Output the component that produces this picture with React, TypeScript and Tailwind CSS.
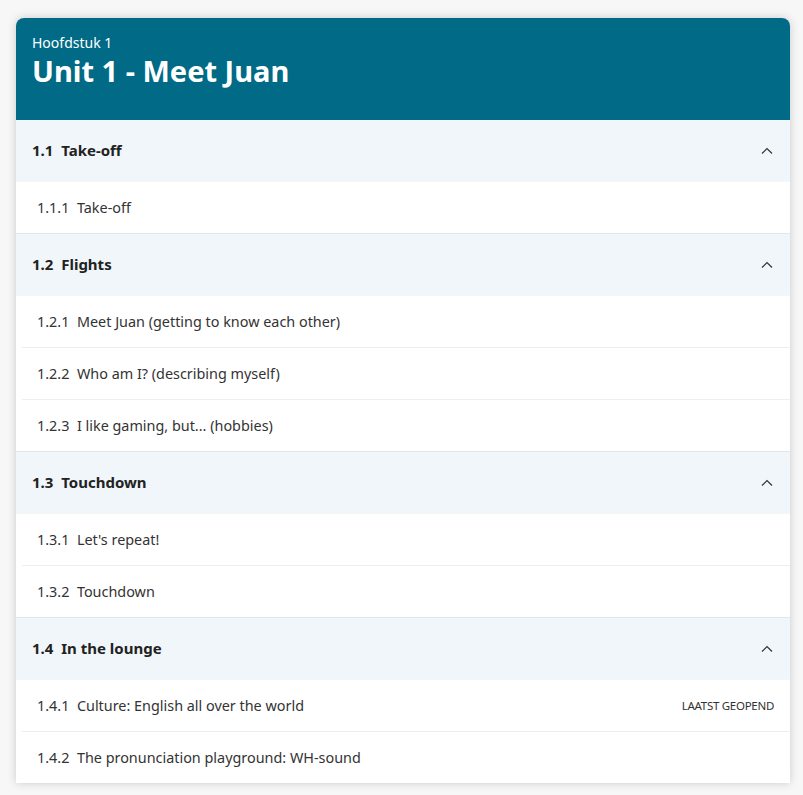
import React from "react";

type Lesson = { num: string; title: string; badge?: string };
type Section = { num: string; title: string; lessons: Lesson[] };

const sections: Section[] = [
  { num: "1.1", title: "Take-off", lessons: [{ num: "1.1.1", title: "Take-off" }] },
  {
    num: "1.2",
    title: "Flights",
    lessons: [
      { num: "1.2.1", title: "Meet Juan (getting to know each other)" },
      { num: "1.2.2", title: "Who am I? (describing myself)" },
      { num: "1.2.3", title: "I like gaming, but... (hobbies)" },
    ],
  },
  {
    num: "1.3",
    title: "Touchdown",
    lessons: [
      { num: "1.3.1", title: "Let's repeat!" },
      { num: "1.3.2", title: "Touchdown" },
    ],
  },
  {
    num: "1.4",
    title: "In the lounge",
    lessons: [
      { num: "1.4.1", title: "Culture: English all over the world", badge: "LAATST GEOPEND" },
      { num: "1.4.2", title: "The pronunciation playground: WH-sound" },
    ],
  },
];

const ChevronUp = () => (
  <svg width="12" height="8" viewBox="0 0 12 8" fill="none">
    <path d="M1 6.5 L6 1.5 L11 6.5" stroke="#333" strokeWidth="1.2" />
  </svg>
);

const App = () => {
  return (
    <div className="min-h-[795px] bg-[#f7f7f7] pt-[18px] px-4 font-['Noto_Sans',sans-serif]">
      <div className="w-[774px] bg-white rounded-t-lg shadow-[0_0_10px_rgba(0,0,0,0.18)]">
        {/* Kop */}
        <div className="bg-[#006a87] rounded-t-lg h-[102px] px-4 pt-[15px]">
          <div className="text-white text-[14px] leading-[19px]">Hoofdstuk 1</div>
          <h1 className="text-white text-[29px] font-bold leading-[38px]">Unit 1 - Meet Juan</h1>
        </div>

        {sections.map((section, i) => (
          <div key={section.num} className={i > 0 ? "border-t border-[#e2e6e8]" : ""}>
            <div className="h-[62px] bg-[#f0f6f9] flex items-center justify-between pl-4 pr-[17px] border-b border-[#f4f7f8]">
              <span className="text-[15px] font-bold text-[#222]">
                {section.num}&nbsp;&nbsp;{section.title}
              </span>
              <ChevronUp />
            </div>
            {section.lessons.map((lesson, j) => (
              <div key={lesson.num} className={j > 0 ? "border-t border-[#eceeef] ml-[6px]" : ""}>
                <div
                  className={`h-[51px] flex items-center justify-between pr-4 ${
                    j > 0 ? "pl-[15px]" : "pl-[21px]"
                  }`}
                >
                  <span className="text-[14.4px] text-[#333]">
                    {lesson.num}&nbsp;&nbsp;{lesson.title}
                  </span>
                  {lesson.badge && (
                    <span className="text-[11.5px] text-[#333] tracking-tight">{lesson.badge}</span>
                  )}
                </div>
              </div>
            ))}
          </div>
        ))}
      </div>
    </div>
  );
};

export default App;
